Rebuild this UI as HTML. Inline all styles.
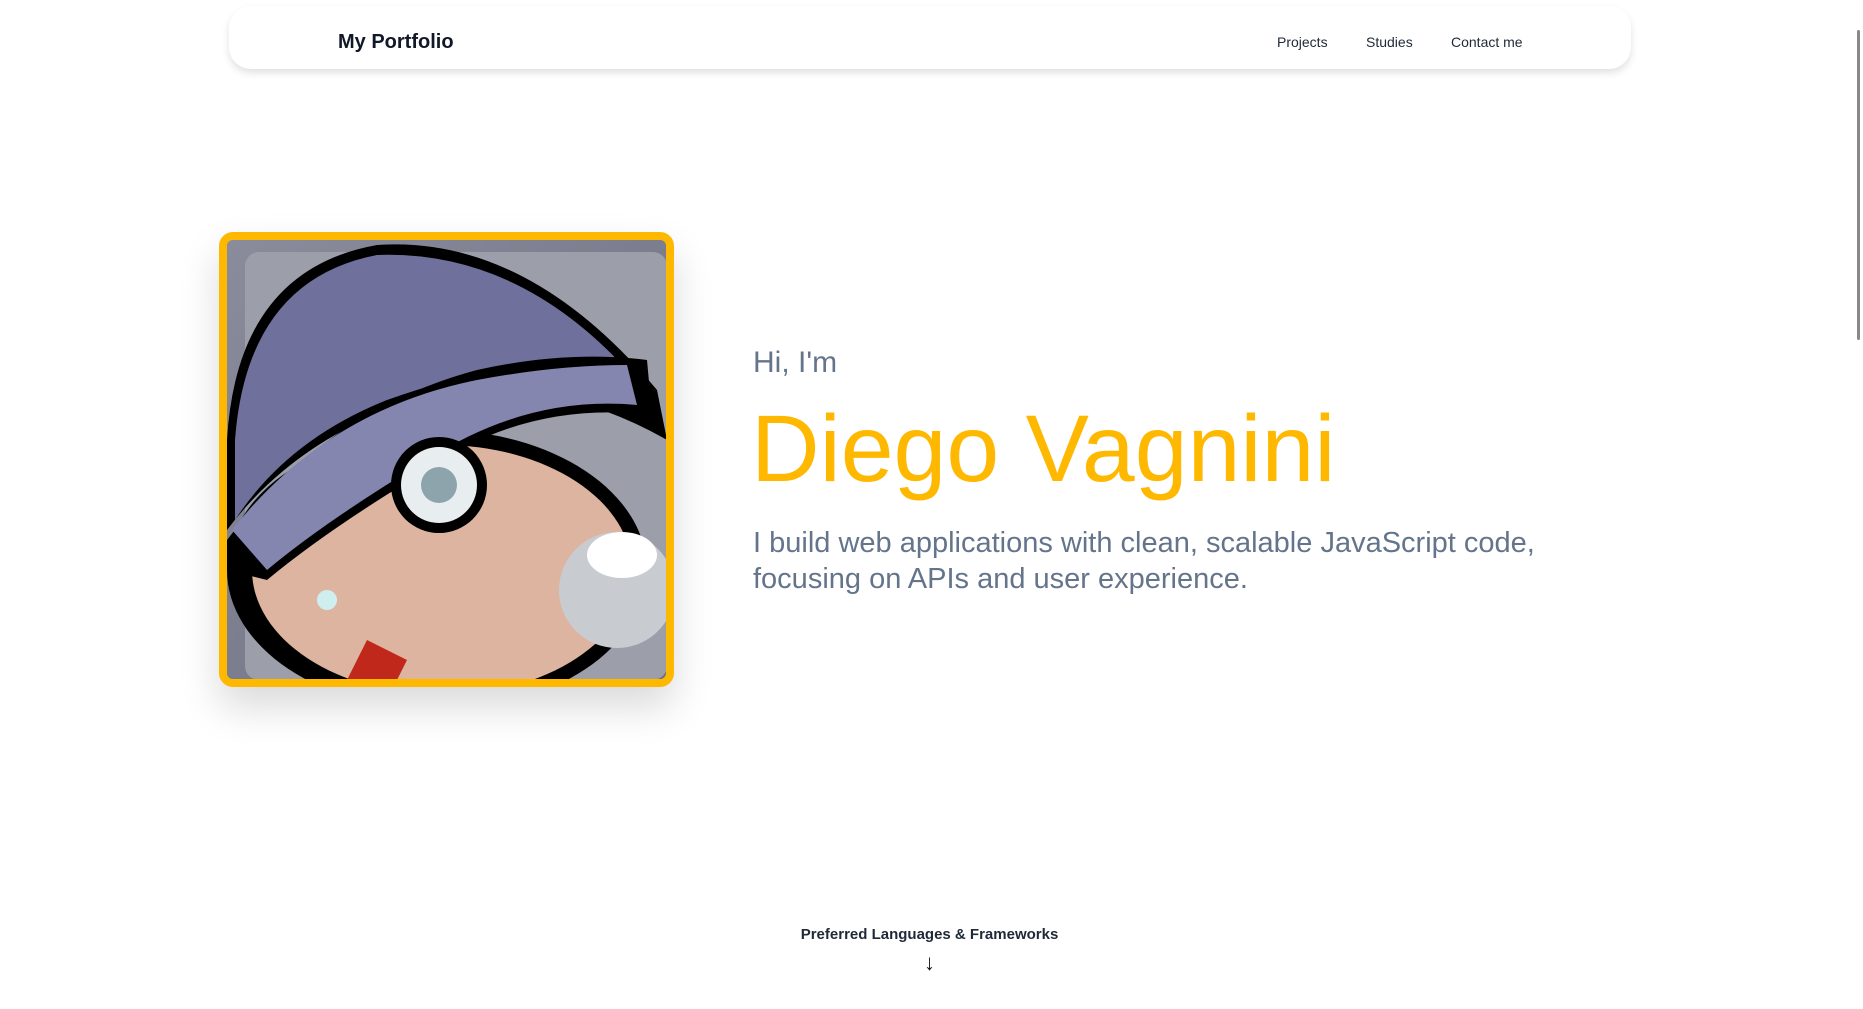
<!DOCTYPE html>
<html><head><meta charset="utf-8"><style>
*{margin:0;padding:0;box-sizing:border-box}
body{width:1863px;height:1009px;background:#fff;font-family:"Liberation Sans",sans-serif;position:relative;overflow:hidden}
.nav{position:absolute;left:229px;top:6px;width:1402px;height:63px;background:#fff;border-radius:22px;box-shadow:0 4px 8px rgba(0,0,0,.12)}
.logo{position:absolute;left:338px;top:31px;font-size:20px;font-weight:bold;color:#111827}
.lk{position:absolute;top:34px;font-size:14px;color:#1f2937}
.frame{position:absolute;left:219px;top:232px;width:455px;height:455px;border:8px solid #ffb800;border-radius:14px;overflow:hidden;background:#7c7f92;box-shadow:0 20px 40px rgba(0,0,0,.15)}
.hi{position:absolute;left:753px;top:346px;font-size:30px;color:#64748b}
.name{position:absolute;left:751px;top:397px;font-size:95px;color:#ffb800;line-height:1.1}
.p{position:absolute;left:753px;top:525px;font-size:29px;line-height:36px;color:#64748b}
.pl{position:absolute;left:0;width:1859px;text-align:center;top:926px;font-size:15px;font-weight:bold;color:#1f2937}
.ar{position:absolute;left:0;width:1859px;text-align:center;top:950px;font-size:22px;color:#111}
.sb{position:absolute;right:0;top:0;width:8px;height:1009px;background:#fff}
.sb div{position:absolute;left:2px;top:30px;width:3px;height:310px;background:#888;border-radius:2px}
</style></head><body>
<div class="nav"></div>
<div class="logo">My Portfolio</div>
<div class="lk" style="left:1277px">Projects</div>
<div class="lk" style="left:1366px">Studies</div>
<div class="lk" style="left:1451px">Contact me</div>
<div class="frame">
<svg width="440" height="440" viewBox="0 0 440 440">
<defs><linearGradient id="bg" x1="0" y1="0" x2="1" y2="1"><stop offset="0" stop-color="#8a8c9c"/><stop offset="1" stop-color="#6c6f80"/></linearGradient></defs>
<rect width="440" height="440" fill="url(#bg)"/>
<rect x="18" y="12" width="422" height="428" rx="14" fill="#9c9eaa"/>
<ellipse cx="210" cy="330" rx="210" ry="140" fill="#000"/>
<ellipse cx="215" cy="330" rx="190" ry="125" fill="#ddb4a0"/>
<path d="M0 200 Q10 30 150 5 Q300 -5 430 150 L440 200 Q300 120 160 170 Q60 210 0 290 Z" fill="#000"/>
<path d="M8 200 Q20 40 150 15 Q290 10 400 130 Q300 110 160 160 Q60 200 8 280 Z" fill="#6f719c"/>
<path d="M0 300 Q100 170 250 130 Q340 110 420 120 L425 175 Q300 160 200 230 Q100 290 40 340 L0 330 Z" fill="#000"/>
<path d="M5 290 Q100 170 250 140 Q330 125 400 125 L410 165 Q300 155 200 220 Q100 280 40 330 Z" fill="#8486b0"/>
<circle cx="212" cy="245" r="48" fill="#000"/>
<circle cx="212" cy="245" r="38" fill="#e8eef0"/>
<circle cx="212" cy="245" r="18" fill="#8ea4ac"/>
<circle cx="390" cy="350" r="58" fill="#c8ccd0"/>
<ellipse cx="395" cy="315" rx="35" ry="23" fill="#fff"/>
<circle cx="100" cy="360" r="10" fill="#cfeeee"/>
<path d="M120 440 L140 400 L180 420 L170 440 Z" fill="#c0281c"/>
</svg></div>
<div class="hi">Hi, I'm</div>
<div class="name">Diego Vagnini</div>
<div class="p">I build web applications with clean, scalable JavaScript code,<br>focusing on APIs and user experience.</div>
<div class="pl">Preferred Languages &amp; Frameworks</div>
<div class="ar">↓</div>
<div class="sb"><div></div></div>
</body></html>
